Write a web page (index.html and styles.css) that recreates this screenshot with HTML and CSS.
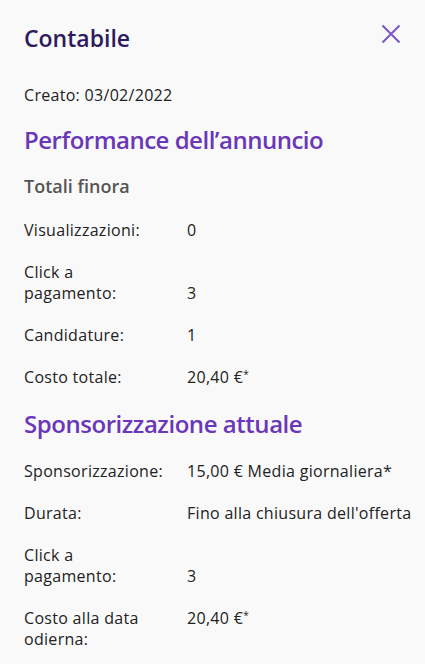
FILE: index.html
```html
<!DOCTYPE html>
<html lang="it">
<head>
<meta charset="utf-8">
<link rel="stylesheet" href="styles.css">
</head>
<body>
<div class="panel">
  <header class="head">
    <h1 class="title">Contabile</h1>
    <button class="close" aria-label="Chiudi">
      <svg width="20" height="20" viewBox="0 0 20 20"><path d="M1.5 1.5 L18.5 18.5 M18.5 1.5 L1.5 18.5" stroke="#7b56c6" stroke-width="2" fill="none"/></svg>
    </button>
  </header>
  <p class="created">Creato: 03/02/2022</p>
  <h2 class="section">Performance dell’annuncio</h2>
  <h3 class="sub">Totali finora</h3>
  <dl class="rows">
    <div class="row"><dt>Visualizzazioni:</dt><dd>0</dd></div>
    <div class="row end"><dt>Click a<br>pagamento:</dt><dd>3</dd></div>
    <div class="row"><dt>Candidature:</dt><dd>1</dd></div>
    <div class="row"><dt>Costo totale:</dt><dd>20,40 €<sup>*</sup></dd></div>
  </dl>
  <h2 class="section second">Sponsorizzazione attuale</h2>
  <dl class="rows second">
    <div class="row"><dt>Sponsorizzazione:</dt><dd>15,00 € Media giornaliera*</dd></div>
    <div class="row"><dt>Durata:</dt><dd>Fino alla chiusura dell'offerta</dd></div>
    <div class="row end"><dt>Click a<br>pagamento:</dt><dd>3</dd></div>
    <div class="row"><dt>Costo alla data<br>odierna:</dt><dd>20,40 €<sup>*</sup></dd></div>
  </dl>
</div>
</body>
</html>
```
FILE: styles.css
```css
html, body {
  margin: 0;
  padding: 0;
  background: #f9f9f9;
}
body {
  font-family: "Open Sans", Lato, sans-serif;
  color: #222;
}
.panel {
  padding: 21px 24px 0 24px;
}
.head {
  display: flex;
  justify-content: space-between;
  align-items: flex-start;
}
.title {
  margin: 0;
  font-size: 23px;
  font-weight: 600;
  color: #2e1a5e;
  line-height: 34px;
}
.close {
  border: 0;
  background: none;
  padding: 0;
  margin: 3px 0 0 0;
  width: 20px;
  height: 20px;
  cursor: pointer;
}
.close svg { display: block; }
.created {
  margin: 30px 0 0 0;
  font-size: 16px;
  line-height: 21px;
  letter-spacing: 0.3px;
}
.section {
  margin: 18px 0 0 0;
  font-size: 24px;
  font-weight: 600;
  color: #6a37b8;
  line-height: 32px;
  letter-spacing: -0.5px;
}
.section.second {
  margin-top: 20px;
  letter-spacing: -0.45px;
}
.sub {
  margin: 18px 0 0 0;
  font-size: 18px;
  font-weight: 600;
  color: #555;
  line-height: 24px;
}
.rows {
  margin: 22px 0 0 0;
  display: flex;
  flex-direction: column;
  gap: 21px;
  font-size: 16px;
  line-height: 21px;
  letter-spacing: 0.3px;
}
.rows.second { margin-top: 21px; }
.row {
  display: flex;
  align-items: flex-start;
}
.row.end { align-items: flex-end; }
.row dt {
  width: 163px;
  flex: none;
}
.row dd {
  margin: 0;
  white-space: nowrap;
}
sup {
  font-size: 10px;
  vertical-align: top;
  line-height: 14px;
}
```
